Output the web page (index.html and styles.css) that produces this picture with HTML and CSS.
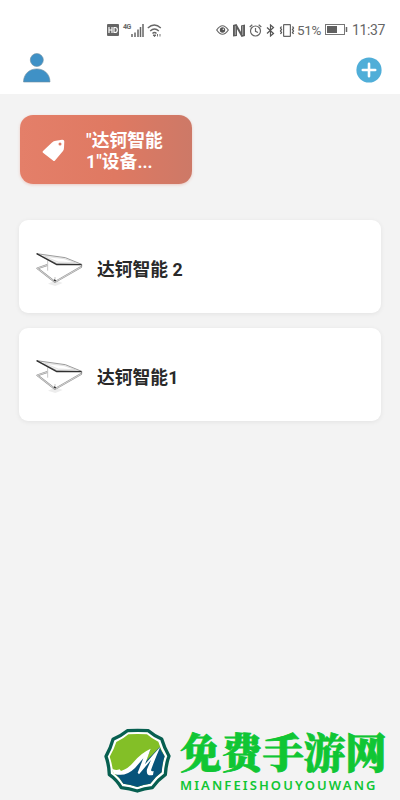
FILE: index.html
```html
<!DOCTYPE html>
<html lang="zh-CN">
<head>
	<meta charset="UTF-8">
	<title>达钶智能</title>
	<link rel="stylesheet" href="styles.css">
</head>
<body>
<svg width="0" height="0" class="defs">
	<symbol id="hatch" viewBox="0 0 144 108">
		<path d="M36 98L58 88L80 96L58 105Z" fill="#ededed"/>
		<path d="M34 42L4 52L57 93L137 47" fill="none" stroke="#999" stroke-width="6" stroke-linejoin="round"/>
		<path d="M34 42L4 52L57 93L137 47" fill="none" stroke="#ddd" stroke-width="2.500"/>
		<path d="M35 28V59M57 78V91" stroke="#bbb" stroke-width="2.500" fill="none"/>
		<path d="M2 8L62 38L137 40L88 20Z" fill="#f1f1f1" stroke="#888" stroke-width="2.500"/>
		<path d="M25 16L67 33L118 35L84 23Z" fill="#fff" stroke="#ccc" stroke-width="1.500"/>
		<path d="M2 8L62 41L137 41" fill="none" stroke="#303030" stroke-width="4"/>
		<path d="M137 40v7" stroke="#777" stroke-width="3"/>
		<path d="M54 86l5 4" stroke="#222" stroke-width="4"/>
	</symbol>
</svg>
<header>
	<div class="status">
		<div class="signal">
			<svg width="12" height="12" viewBox="0 0 12 12"><rect width="12" height="12" rx="1" fill="#666"/><path d="M2 3v6M5 3v6M2 6h3M7 3.500h1q2.300 0 2.300 2.500t-2.300 2.500h-1z" fill="none" stroke="#fff" stroke-width="1.200"/></svg>
			<span class="net">4G</span>
			<svg width="13" height="13" viewBox="0 0 13 13"><path d="M1 10v3M4 8.500v4.500M7 5.500v7.500M9.500 3v10M12 0v13" stroke="#666" stroke-width="1.500"/></svg>
			<svg class="wifi" width="15" height="13" viewBox="0 0 15 13"><path d="M.8 4q6.500-6 13 0M3.200 7q4.300-4 8.600 0M5.500 9.500q2-2 4 0" fill="none" stroke="#666" stroke-width="1.400"/><path d="M6 11h3l-1.500 1.700zM10.500 10v2.500M13 10v2.500" fill="#666" stroke="#666" stroke-width=".9"/></svg>
		</div>
		<div class="phone">
			<svg width="13" height="12" viewBox="0 0 13 12"><path d="M.7 6Q6.500-2.500 12.300 6Q6.500 14.500.7 6Z" fill="none" stroke="#666" stroke-width="1.200"/><circle cx="6.500" cy="6" r="2.700" fill="#555"/><circle cx="7.300" cy="5.200" r=".7" fill="#fff"/></svg>
			<svg width="12" height="13" viewBox="0 0 12 13"><path d="M0 1l3.500-1 4.500 8V1.500l4-1v11.500l-3.500 1-4.500-8v7l-4 .5z" fill="#5d5d5d"/><path d="M2.300 2v9M9.700 2v9" stroke="#ddd" stroke-width=".6"/></svg>
			<svg width="13" height="13" viewBox="0 0 13 13"><circle cx="6.500" cy="7" r="5" fill="none" stroke="#666" stroke-width="1.200"/><path d="M.7 3l2.600-2.300M12.300 3L9.700.7M6.500 4v3.300l2.500 1.200" fill="none" stroke="#666" stroke-width="1.200"/></svg>
			<svg width="9" height="13" viewBox="0 0 9 13"><path d="M1 3.500l6.500 6-3 2.500V1l3 2.500-6.500 6" fill="none" stroke="#555" stroke-width="1.200"/></svg>
			<svg width="16" height="13" viewBox="0 0 16 13"><rect x="4.600" y=".6" width="6.800" height="11.800" rx=".5" fill="none" stroke="#666" stroke-width="1.200"/><path d="M2.500 2.500l-1 1.500 1 1.500-1 1.500 1 1.500-1 1.500M13.500 2.500l1 1.500-1 1.500 1 1.500-1 1.500 1 1.500" fill="none" stroke="#555" stroke-width="1.300"/></svg>
			<span class="percent">51%</span>
			<svg class="battery" width="23" height="12" viewBox="0 0 23 12"><rect x=".5" y=".5" width="19" height="10" fill="#fff" stroke="#777"/><rect x="2" y="2" width="10" height="7" fill="#606060"/><path d="M21.500 3v5" stroke="#666" stroke-width="1.500"/></svg>
			<span class="time">11:37</span>
		</div>
	</div>
	<div class="bar">
		<svg width="28" height="30" viewBox="0 0 28 30"><g fill="#3f91c6" stroke="#718fa0" stroke-width=".6"><circle cx="13.800" cy="7" r="6.500"/><path d="M.5 29C.5 11.500 27 11.500 27 29Z"/></g></svg>
		<svg class="add" width="26" height="26" viewBox="0 0 26 26"><circle cx="13" cy="13" r="12.600" fill="#50aed8"/><path d="M13 6.800v12.400M6.800 13h12.400" stroke="#fff" stroke-width="2.600" stroke-linecap="round"/></svg>
	</div>
</header>
<main>
	<div class="group">
		<svg width="23" height="23" viewBox="0 0 23 23"><path d="M1 12L10 3.500Q11.500 2 14 1.800L20 .8Q22.300.5 22.300 2.500L22 8.500Q22 10.500 21 12L13 21.500Q12 22.500 11 21.500L1 13.800Q0 13 1 12Z" fill="#fff"/><circle cx="18" cy="5" r="1.500" fill="#df7b65"/></svg>
		<div class="group-name">"达钶智能<br>1"设备...</div>
	</div>
	<div class="card">
		<svg width="48" height="36"><use href="#hatch"/></svg>
		<span>达钶智能 2</span>
	</div>
	<div class="card">
		<svg width="48" height="36"><use href="#hatch"/></svg>
		<span>达钶智能1</span>
	</div>
</main>
<footer>
	<svg width="67" height="65" viewBox="27 24 201 195">
		<path d="M97 32Q128 30 160 32Q176 46 200 57Q208 84 222 108Q213 132 211 164Q188 180 172 203Q148 206 127 213Q103 206 79 203Q65 179 43 164Q42 134 33 109Q47 84 54 58Q80 46 97 32Z" fill="#fff" stroke="#075f50" stroke-width="10" stroke-linejoin="round"/>
		<path d="M100 43Q128 41 156 43Q170 56 190 65Q197 88 209 109Q202 130 200 157Q180 171 166 191Q145 194 127 201Q106 194 85 191Q73 171 54 158Q52 132 44 110Q57 88 64 66Q86 56 100 43Z" fill="#83bf27"/>
		<path d="M60 160Q91 170 113 144Q134 114 166 91L151 125Q173 104 194 81Q199 94 209 109Q202 130 200 157Q180 171 166 191Q145 194 127 201Q106 194 85 191Q76 174 60 161Z" fill="#07547a"/>
		<path d="M50 145Q60 153 74 148L78 153Q100 146 116 126Q138 99 167 86L150 133Q173 105 196 80Q179 119 170 145Q165 157 176 153L174 165Q152 170 156 148L168 120L132 163L128 158L145 115L120 144Q91 173 56 161Z" fill="#fff"/>
	</svg>
	<div class="brand">
		<div class="brand-name">免费手游网</div>
		<div class="brand-latin">MIANFEISHOUYOUWANG</div>
	</div>
</footer>
</body>
</html>
```

FILE: styles.css
```css
*{
	box-sizing: border-box;
}
body{
	margin: 0;
	height: 800px;
	overflow: hidden;
	display: flex;
	flex-direction: column;
	background: #f3f3f3;
	font-family: Roboto, "Noto Sans CJK SC", sans-serif;
	color: #292929;
}
svg{
	display: block;
	flex: none;
}
.defs{
	position: absolute;
}
header{
	height: 94px;
	background: #fff;
}
.status{
	height: 48px;
	padding: 12px 15px 0 107px;
	display: flex;
	justify-content: space-between;
	align-items: center;
	color: #666;
}
.signal, .phone{
	display: flex;
	align-items: center;
	height: 20px;
}
.net{
	width: 8px;
	margin: -7px 0 0 4px;
	font-size: 7px;
	line-height: 8px;
	font-weight: bold;
	letter-spacing: -0.5px;
}
.wifi{
	margin-left: 3px;
}
.phone{
	gap: 4px;
	width: 169px;
}
.percent{
	width: 25px;
	margin-left: -2px;
	font-size: 13.5px;
	letter-spacing: -0.3px;
}
.battery{
	margin-left: -1px;
}
.time{
	font-size: 14px;
	letter-spacing: -0.4px;
	white-space: nowrap;
}
.bar{
	display: flex;
	justify-content: space-between;
	align-items: center;
	padding: 5px 18px 0 23px;
}
.add{
	margin-top: 4px;
}
main{
	flex: 1;
	padding: 21px 19px 0;
}
.group{
	display: flex;
	align-items: center;
	width: 172px;
	height: 69px;
	margin: 0 0 36px 1px;
	padding: 2px 0 0 22px;
	gap: 21px;
	border-radius: 13px;
	background: linear-gradient(90deg, #e47f69, #df7962 55%, #cd7967);
	box-shadow: 0 1px 3px #df796255;
	color: #fff;
}
.group-name{
	font-size: 17.8px;
	line-height: 21px;
	font-weight: 600;
}
.card{
	display: flex;
	align-items: center;
	height: 93px;
	margin-bottom: 14.5px;
	padding: 4px 17px 0;
	gap: 13px;
	border-radius: 9px;
	background: #fff;
	box-shadow: 0 1px 5px #00000012;
	font-size: 17.8px;
	font-weight: bold;
}
.card span{
	margin-top: -1px;
}
footer{
	display: flex;
	align-items: flex-start;
	height: 72px;
	padding-left: 104px;
	gap: 9px;
}
.brand{
	color: #10c634;
	white-space: nowrap;
}
.brand-name{
	font-family: "Noto Serif CJK SC", "Noto Sans CJK SC", serif;
	font-size: 41.3px;
	line-height: 44px;
	height: 49px;
	font-weight: 900;
	-webkit-text-stroke: 0.9px #10c634;
}
.brand-latin{
	font-family: "Noto Sans", sans-serif;
	font-size: 13px;
	line-height: 16px;
	font-weight: 600;
	letter-spacing: 2.1px;
}
```
